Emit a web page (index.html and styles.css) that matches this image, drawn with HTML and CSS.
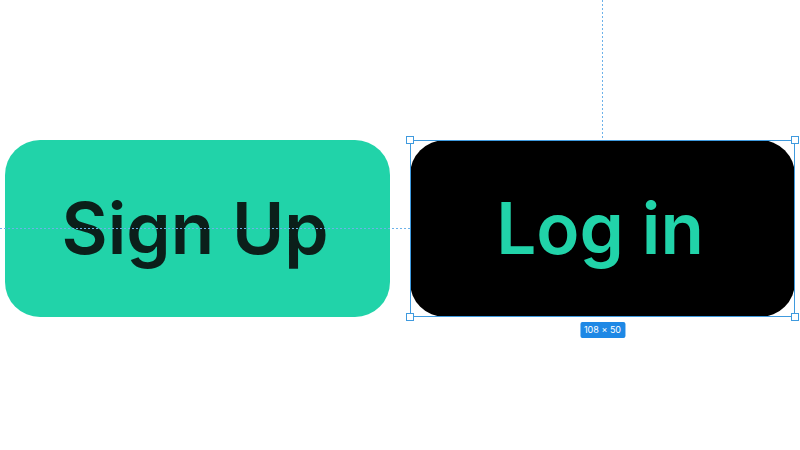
FILE: index.html
```html
<!DOCTYPE html>
<html>
<head>
<meta charset="utf-8">
<link rel="stylesheet" href="styles.css">
</head>
<body>
<div class="canvas">
  <div class="guide-h"></div>
  <div class="guide-v"></div>
  <div class="row">
    <div class="btn btn-signup">Sign Up</div>
    <div class="selected">
      <div class="btn btn-login">Log in</div>
      <div class="frame">
        <span class="handle tl"></span>
        <span class="handle tr"></span>
        <span class="handle bl"></span>
        <span class="handle br"></span>
        <span class="badge">108 × 50</span>
      </div>
    </div>
  </div>
</div>
</body>
</html>
```
FILE: styles.css
```css
html, body {
  margin: 0;
  padding: 0;
  background: #ffffff;
}
.canvas {
  position: relative;
  width: 800px;
  height: 450px;
  overflow: hidden;
  font-family: "Inter", "Noto Sans", sans-serif;
}
.row {
  display: flex;
  gap: 20px;
  padding: 140px 0 0 5px;
}
.btn {
  width: 385px;
  height: 177px;
  border-radius: 35px;
  display: flex;
  align-items: center;
  justify-content: center;
  font-size: 71px;
  font-weight: 600;
  box-sizing: border-box;
  padding: 0 5px 2px 0;
}
.btn-signup {
  background: #21d3a9;
  color: #0b1f1a;
}
.btn-login {
  background: #000000;
  color: #21d3a9;
}
.selected {
  position: relative;
}
.frame {
  position: absolute;
  inset: 0;
  border: 1px solid #3f9ade;
  pointer-events: none;
}
.handle {
  position: absolute;
  width: 6px;
  height: 6px;
  background: #ffffff;
  border: 1px solid #3f9ade;
}
.tl { left: -5px; top: -5px; }
.tr { right: -5px; top: -5px; }
.bl { left: -5px; bottom: -5px; }
.br { right: -5px; bottom: -5px; }
.badge {
  position: absolute;
  left: 50%;
  top: 100%;
  margin-top: 6px;
  transform: translateX(-50%);
  background: #1e88e5;
  color: #ffffff;
  font-size: 9px;
  line-height: 16px;
  padding: 0 4px;
  border-radius: 2px;
  white-space: nowrap;
}
.guide-h {
  position: absolute;
  left: 0;
  top: 228px;
  width: 410px;
  height: 1px;
  background: repeating-linear-gradient(to right, #6cb2ea 0 2px, transparent 2px 4px);
  z-index: 2;
}
.guide-v {
  position: absolute;
  left: 602px;
  top: 0;
  width: 1px;
  height: 140px;
  background: repeating-linear-gradient(to bottom, #6cb2ea 0 2px, transparent 2px 4px);
  z-index: 2;
}
```
